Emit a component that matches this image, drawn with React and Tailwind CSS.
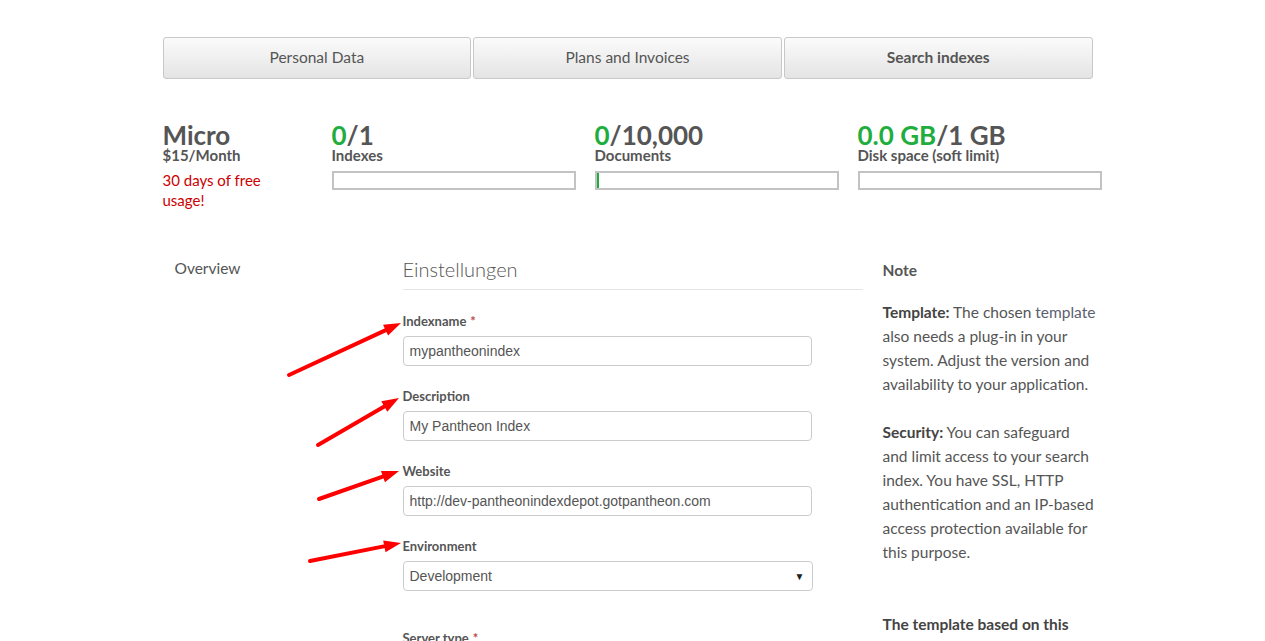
import React from 'react';

const sans = { fontFamily: 'Lato, "Open Sans", sans-serif' };

function Arrow({ x1, y1, x2, y2 }) {
  const dx = x2 - x1;
  const dy = y2 - y1;
  const len = Math.hypot(dx, dy);
  const ux = dx / len;
  const uy = dy / len;
  const hl = 17;
  const hw = 6;
  const bx = x2 - ux * hl;
  const by = y2 - uy * hl;
  const pts = `${x2},${y2} ${bx - uy * hw},${by + ux * hw} ${bx + uy * hw},${by - ux * hw}`;
  return (
    <g>
      <line x1={x1} y1={y1} x2={bx + ux * 2} y2={by + uy * 2} stroke="#f00" strokeWidth="4" strokeLinecap="round" />
      <polygon points={pts} fill="#f00" />
    </g>
  );
}

const tabs = [
  { label: 'Personal Data' },
  { label: 'Plans and Invoices' },
  { label: 'Search indexes', active: true },
];

const stats = [
  { used: '0', total: '/1', label: 'Indexes', fill: 0 },
  { used: '0', total: '/10,000', label: 'Documents', fill: 2 },
  { used: '0.0 GB', total: '/1 GB', label: 'Disk space (soft limit)', fill: 0 },
];

function Field({ label, required, value, select }) {
  return (
    <div className="mb-[21px]">
      <div className="text-[13px] font-bold text-[#555] leading-[18px] mb-[6px]">
        {label}
        {required && <span className="text-[#b94a48] ml-1">*</span>}
      </div>
      <div
        className={`${select ? 'w-[410px]' : 'w-[409px]'} h-[30px] border border-[#ccc] rounded-[4px] bg-white flex items-center justify-between px-[6px] text-[14px] text-[#555]`}
        style={{ fontFamily: '"Liberation Sans", Arial, sans-serif' }}
      >
        <span>{value}</span>
        {select && <span className="text-[10px] text-[#222] mr-[1px]">▼</span>}
      </div>
    </div>
  );
}

export default function App() {
  return (
    <div className="relative min-h-[641px] bg-white overflow-hidden" style={sans}>
      <div className="w-[940px] mx-auto pt-[37px]">
        {/* tabs */}
        <div className="flex gap-[2px] w-[930px]">
          {tabs.map((t) => (
            <div
              key={t.label}
              className={`flex-1 h-[42px] flex items-center justify-center rounded-[3px] border border-[#c8c8c8] bg-gradient-to-b from-[#fbfbfb] to-[#e4e4e4] text-[15.5px] text-[#555] ${t.active ? 'font-bold' : ''}`}
            >
              {t.label}
            </div>
          ))}
        </div>

        {/* plan stats */}
        <div className="flex mt-[44px]">
          <div className="w-[169px] shrink-0 text-[#555]">
            <div className="text-[26px] font-bold leading-[24px]">Micro</div>
            <div className="text-[15px] font-bold leading-[16px]">$15/Month</div>
            <div className="text-[15px] text-[#cc0000] leading-[20px] mt-[7px]">
              30 days of free<br />usage!
            </div>
          </div>
          {stats.map((s) => (
            <div key={s.label} className="w-[263px] shrink-0">
              <div className="text-[26px] font-bold leading-[24px] text-[#555]">
                <span className="text-[#1fae3e]">{s.used}</span>
                {s.total}
              </div>
              <div className="text-[15px] font-bold leading-[16px] text-[#555]">{s.label}</div>
              <div className="w-[244px] h-[19px] border-2 border-[#c3c3c3] mt-[8px] bg-white flex">
                {s.fill > 0 && <div className="w-[2px] h-full bg-[#1fae3e]" />}
              </div>
            </div>
          ))}
        </div>

        {/* main */}
        <div className="flex mt-[39px]">
          <div className="w-[240px] shrink-0 pl-[12px]">
            <div className="text-[15.5px] text-[#555] leading-[20px] mt-[9px]">Overview</div>
          </div>
          <div className="w-[460px] shrink-0">
            <div className="text-[20px] text-[#555] font-light leading-[26px] mt-[7px] pb-[7px] border-b border-[#e5e5e5]">
              Einstellungen
            </div>
            <div className="mt-[22px]">
              <Field label="Indexname" required value="mypantheonindex" />
              <Field label="Description" value="My Pantheon Index" />
              <Field label="Website" value="http://dev-pantheonindexdepot.gotpantheon.com" />
              <Field label="Environment" value="Development" select />
              <div className="text-[13px] font-bold text-[#555] leading-[18px] mt-[38px]">
                Server type<span className="text-[#b94a48] ml-1">*</span>
              </div>
            </div>
          </div>
          <div className="w-[220px] shrink-0 ml-[20px] text-[15.5px] text-[#555] leading-[24px]">
            <div className="font-bold mt-[9px]">Note</div>
            <p className="mt-[18px]">
              <b className="text-[#444]">Template:</b> The chosen <span className="text-[#5b6070]">template</span><br />
              also needs a plug-in in your<br />
              system. Adjust the version and<br />
              availability to your application.
            </p>
            <p className="mt-[24px]">
              <b className="text-[#444]">Security:</b> You can safeguard<br />
              and limit access to your search<br />
              index. You have SSL, HTTP<br />
              authentication and an IP-based<br />
              access protection available for<br />
              this purpose.
            </p>
            <p className="mt-[48px] font-bold text-[#444]">The template based on this</p>
          </div>
        </div>
      </div>

      <svg className="absolute inset-0 pointer-events-none" width="1265" height="641">
        <Arrow x1={289} y1={375} x2={401} y2={323} />
        <Arrow x1={318} y1={445} x2={399} y2={398} />
        <Arrow x1={319} y1={499} x2={399} y2={471} />
        <Arrow x1={310} y1={561} x2={401} y2={543} />
      </svg>
    </div>
  );
}
